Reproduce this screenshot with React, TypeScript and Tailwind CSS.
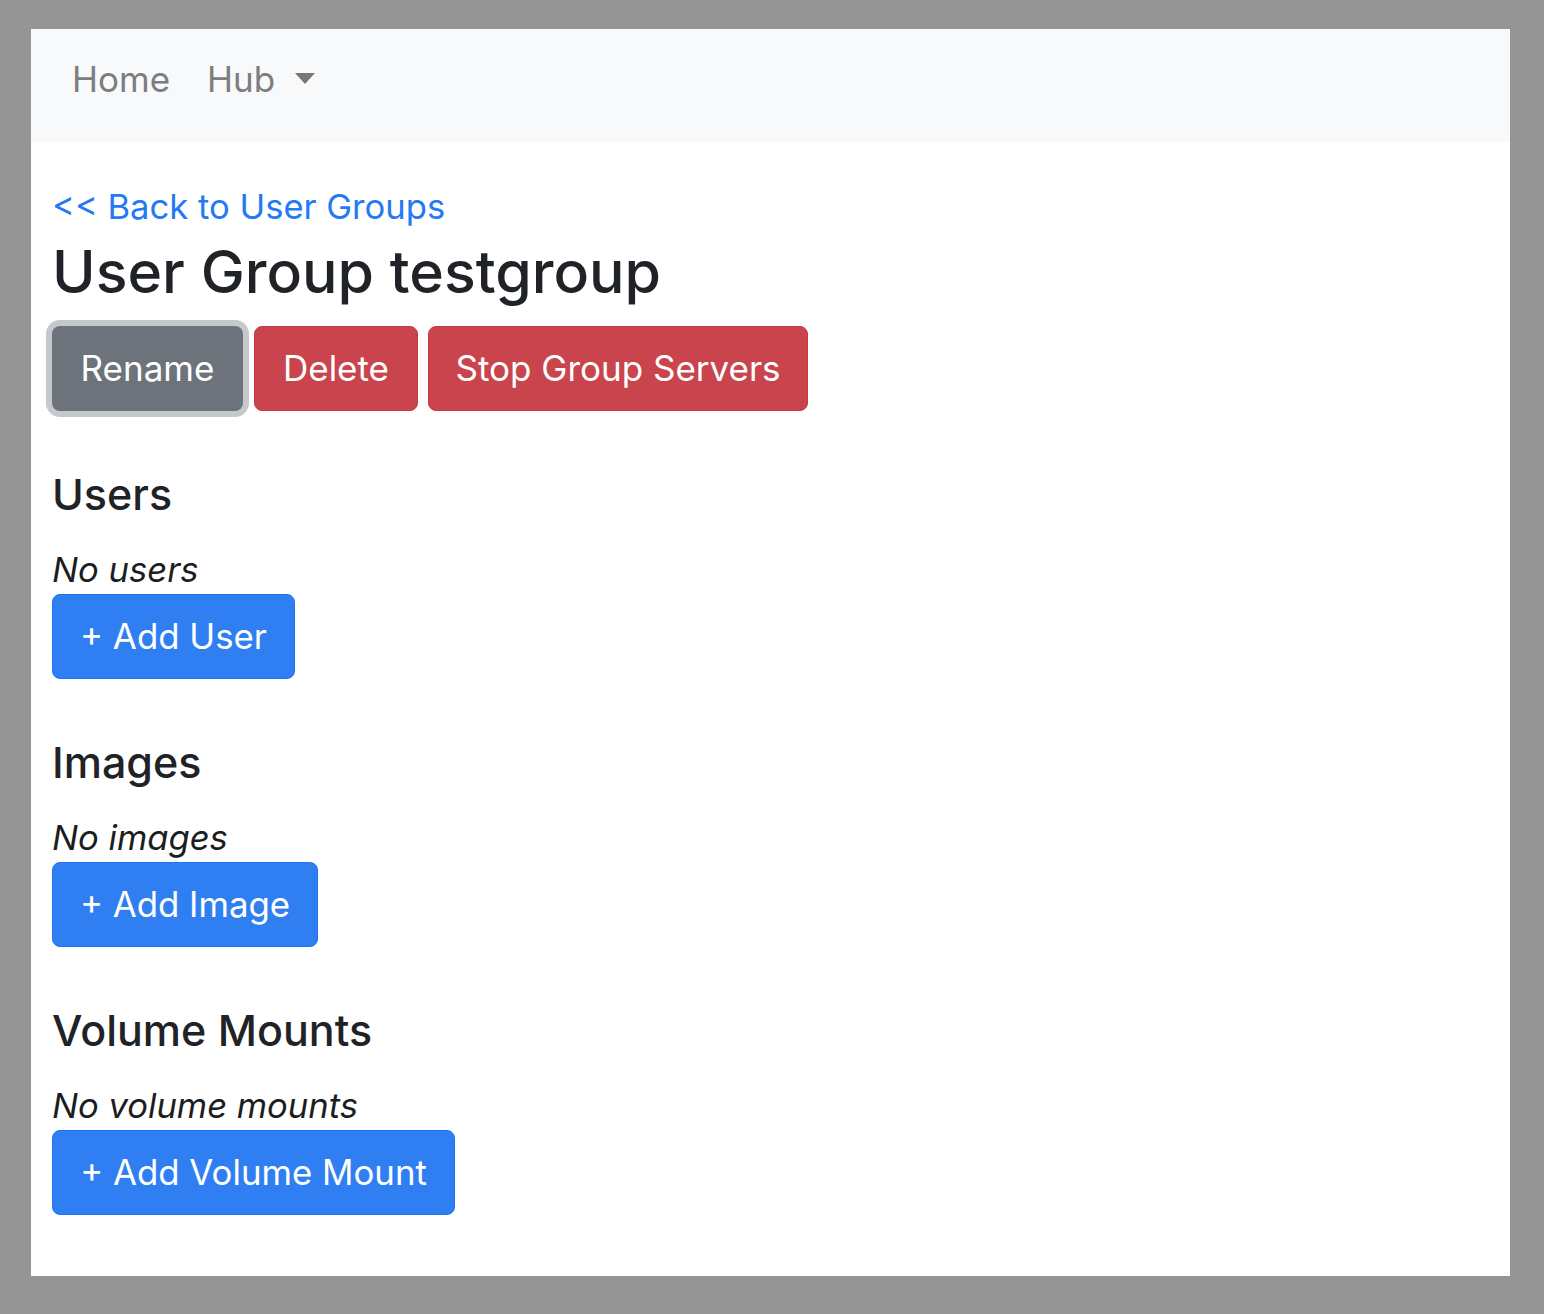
import React from 'react'

const font = { fontFamily: 'Inter, "Liberation Sans", sans-serif' }

const Section = ({ title, empty, action, width }: { title: string; empty: string; action: string; width: string }) => (
  <div className="mt-[54px]">
    <h4 className="text-[43px] leading-[58px] font-medium text-[#1f2226]">{title}</h4>
    <p className="mt-[22px] text-[34.6px] leading-[48px] italic text-[#1b1d20]">{empty}</p>
    <button
      className={`mt-[1px] h-[85px] ${width} rounded-lg border border-[#1f73f2] bg-[#2f7ff3] text-[34.8px] text-white`}
    >
      {action}
    </button>
  </div>
)

export default function App() {
  return (
    <div className="min-h-[1314px] bg-[#959595] pt-[29px] pl-[31px] pr-[34px] pb-[38px]" style={font}>
      <div className="bg-white">
        {/* Navbar */}
        <nav className="h-[113px] bg-[#f8f9fa] pt-[20px] pl-[41px]">
          <div className="flex items-center text-[35px] leading-[60px] text-[#7c7d7e]">
            <span>Home</span>
            <span className="ml-[37px]">Hub</span>
            <span className="ml-[20px] mb-[2px] h-0 w-0 border-l-[10px] border-r-[10px] border-t-[11px] border-l-transparent border-r-transparent border-t-[#777]" />
          </div>
        </nav>

        {/* Content */}
        <div className="pl-[21px] pt-[40px] pb-[61px]">
          <a className="block text-[34.6px] leading-[48px] text-[#2479f5]">&lt;&lt; Back to User Groups</a>
          <h2 className="mt-[4px] text-[59px] leading-[76px] font-medium text-[#1f2226]">User Group testgroup</h2>

          <div className="mt-[16px] flex">
            <button className="h-[85px] w-[191px] rounded-lg bg-[#6c737b] text-[35px] text-white ring-[6px] ring-[#c5c9cc]">
              Rename
            </button>
            <button className="ml-[11px] h-[85px] w-[164px] rounded-lg border border-[#c53a43] bg-[#c9444c] text-[35px] text-white">
              Delete
            </button>
            <button className="ml-[10px] h-[85px] w-[380px] rounded-lg border border-[#c53a43] bg-[#c9444c] text-[35px] text-white">
              Stop Group Servers
            </button>
          </div>

          <Section title="Users" empty="No users" action="+ Add User" width="w-[243px]" />
          <Section title="Images" empty="No images" action="+ Add Image" width="w-[266px]" />
          <Section title="Volume Mounts" empty="No volume mounts" action="+ Add Volume Mount" width="w-[403px]" />
        </div>
      </div>
    </div>
  )
}
